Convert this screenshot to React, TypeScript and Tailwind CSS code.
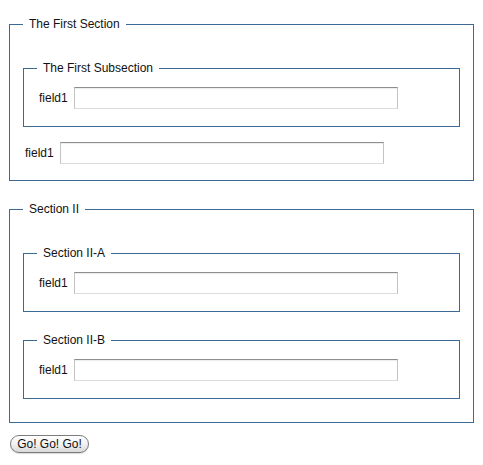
function Field({ className = '' }: { className?: string }) {
  return (
    <div className={`flex items-center gap-[6px] ml-[2px] ${className}`}>
      <label>field1</label>
      <input
        type="text"
        className="w-[324px] h-[22px] bg-white border border-t-[#8e8e8e] border-x-[#c4c4c4] border-b-[#dcdcdc] shadow-[inset_0_1px_1px_rgba(0,0,0,0.08)] outline-none"
      />
    </div>
  );
}

export default function App() {
  return (
    <div className="min-h-screen bg-white px-[9px] pt-[17px] font-['Liberation_Sans',Arial,sans-serif] text-[12px] leading-[15px] text-[#111]">
      {/* Section 1 */}
      <fieldset className="m-0 border border-[#3c6a93] px-[13px] pt-[29px] pb-[16px]">
        <legend className="px-[6px]">The First Section</legend>
        <fieldset className="m-0 border border-[#3c6a93] px-[13px] pt-[11px] pb-[17px]">
          <legend className="px-[6px]">The First Subsection</legend>
          <Field />
        </fieldset>
        <Field className="mt-[15px]" />
      </fieldset>

      {/* Section 2 */}
      <fieldset className="m-0 mt-[21px] border border-[#3c6a93] px-[13px] pt-[29px] pb-[23px]">
        <legend className="px-[6px]">Section II</legend>
        <fieldset className="m-0 border border-[#3c6a93] px-[13px] pt-[11px] pb-[17px]">
          <legend className="px-[6px]">Section II-A</legend>
          <Field />
        </fieldset>
        <fieldset className="m-0 mt-[21px] border border-[#3c6a93] px-[13px] pt-[11px] pb-[17px]">
          <legend className="px-[6px]">Section II-B</legend>
          <Field />
        </fieldset>
      </fieldset>

      <button className="mt-[12px] ml-[1px] h-[18px] w-[79px] rounded-full border border-[#7c7c7c] bg-linear-to-b from-white via-[#f2f2f2] to-[#d9d9d9] text-[12px] leading-none text-[#111] shadow-[0_1px_1px_rgba(0,0,0,0.15)]">
        Go! Go! Go!
      </button>
    </div>
  );
}
